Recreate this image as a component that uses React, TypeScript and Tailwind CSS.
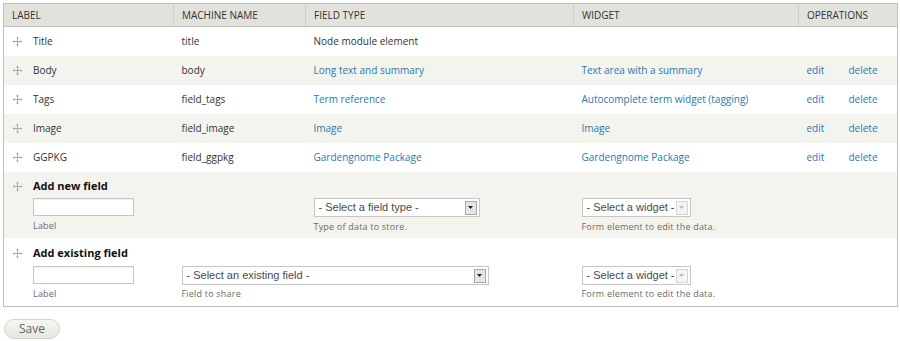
import React from "react";

type Field = {
  label: string;
  machine: string;
  type: string;
  widget: string;
  linked: boolean;
};

const fields: Field[] = [
  { label: "Title", machine: "title", type: "Node module element", widget: "", linked: false },
  { label: "Body", machine: "body", type: "Long text and summary", widget: "Text area with a summary", linked: true },
  { label: "Tags", machine: "field_tags", type: "Term reference", widget: "Autocomplete term widget (tagging)", linked: true },
  { label: "Image", machine: "field_image", type: "Image", widget: "Image", linked: true },
  { label: "GGPKG", machine: "field_ggpkg", type: "Gardengnome Package", widget: "Gardengnome Package", linked: true }
];

const font = "font-['Open_Sans',sans-serif]";

function DragHandle() {
  return (
    <span className="flex w-[21px] shrink-0">
      <svg width="11" height="11" viewBox="0 0 11 11" fill="none">
        <path d="M5.5 1.5v8M1.5 5.5h8" stroke="#aaaaa6" strokeWidth="1" />
        <path d="M5.5 0.5l-1.6 1.8h3.2zM5.5 10.5l-1.6-1.8h3.2zM0.5 5.5l1.8-1.6v3.2zM10.5 5.5l-1.8-1.6v3.2z" fill="#aaaaa6" />
      </svg>
    </span>
  );
}

function FakeSelect({ text, width, disabled }: { text: string; width: string; disabled?: boolean }) {
  return (
    <div
      className={`flex h-[19px] items-center justify-between border border-[#c6c6c6] bg-white pl-[4px] pr-[2px] ${width}`}
    >
      <span className="whitespace-nowrap font-['Liberation_Sans',Arial,sans-serif] text-[11px] leading-[13px] text-[#4a4a4a]">{text}</span>
      <span
        className={`flex h-[14px] w-[12px] shrink-0 items-center justify-center border ${
          disabled ? "border-[#d6d6d6] bg-[#f4f4f4]" : "border-[#a9a9a9] bg-[#e4e4e4]"
        }`}
      >
        <svg width="5" height="3" viewBox="0 0 5 3">
          <path d="M0 0h5L2.5 3z" fill={disabled ? "#b8b8b8" : "#222"} />
        </svg>
      </span>
    </div>
  );
}

function Desc({ children, className = "" }: { children: React.ReactNode; className?: string }) {
  return <div className={`whitespace-nowrap text-[9px] leading-[12px] tracking-[0.2px] text-[#6b6b6b] ${className}`}>{children}</div>;
}

function TextBox() {
  return <div className="ml-[21px] h-[18px] w-[101px] border border-[#c6c6c6] bg-white shadow-[inset_0_1px_1px_rgba(0,0,0,0.06)]" />;
}

export default function App() {
  const link = "text-[#2a78b8]";
  return (
    <div className={`min-h-[341px] bg-white px-[3px] pt-[3px] ${font} text-[#333]`}>
      <table className="w-[894px] table-fixed border-collapse border border-[#bebfb9] text-[10px]">
        <colgroup>
          <col className="w-[170px]" />
          <col className="w-[132px]" />
          <col className="w-[268px]" />
          <col className="w-[225px]" />
          <col className="w-[42px]" />
          <col className="w-[57px]" />
        </colgroup>
        <thead>
          <tr className="bg-[#e1e2dc]">
            {["Label", "Machine name", "Field type", "Widget"].map((h) => (
              <th
                key={h}
                className="border-r border-b border-r-[#cfd0ca] border-b-[#bebfb9] px-[8px] py-[5px] text-left text-[10px] font-normal uppercase leading-[12px]"
              >
                {h}
              </th>
            ))}
            <th colSpan={2} className="border-b border-[#bebfb9] px-[8px] py-[5px] text-left text-[10px] font-normal uppercase leading-[12px]">
              Operations
            </th>
          </tr>
        </thead>
        <tbody>
          {fields.map((f, i) => (
            <tr key={f.machine} className={i % 2 === 1 ? "bg-[#f3f4ee]" : "bg-white"}>
              <td className="py-[8px] pl-[8px] pr-[8px] leading-[13px]">
                <div className="flex items-center">
                  <DragHandle />
                  <span>{f.label}</span>
                </div>
              </td>
              <td className="px-[8px] py-[8px] leading-[13px]">{f.machine}</td>
              <td className={`px-[8px] py-[8px] leading-[13px] ${f.linked ? link : ""}`}>{f.type}</td>
              <td className={`px-[8px] py-[8px] leading-[13px] ${link}`}>{f.widget}</td>
              <td className={`px-[8px] py-[8px] leading-[13px] ${link}`}>{f.linked ? "edit" : ""}</td>
              <td className={`px-[8px] py-[8px] leading-[13px] ${link}`}>{f.linked ? "delete" : ""}</td>
            </tr>
          ))}

          <tr className="bg-[#f3f4ee] align-top">
            <td className="px-[8px] pt-[7px] pb-[6px]">
              <div className="flex items-center">
                <DragHandle />
                <span className="text-[11px] font-bold leading-[14px] text-[#111]">Add new field</span>
              </div>
              <div className="mt-[5px]">
                <TextBox />
              </div>
              <Desc className="ml-[21px] mt-[4px]">Label</Desc>
            </td>
            <td />
            <td className="px-[8px] pt-[26px]">
              <FakeSelect text="- Select a field type -" width="w-[166px]" />
              <Desc className="mt-[4px]">Type of data to store.</Desc>
            </td>
            <td className="px-[8px] pt-[26px]">
              <FakeSelect text="- Select a widget -" width="w-[109px]" disabled />
              <Desc className="mt-[4px]">Form element to edit the data.</Desc>
            </td>
            <td colSpan={2} />
          </tr>

          <tr className="bg-white align-top">
            <td className="px-[8px] pt-[8px] pb-[6px]">
              <div className="flex items-center">
                <DragHandle />
                <span className="text-[11px] font-bold leading-[14px] text-[#111]">Add existing field</span>
              </div>
              <div className="mt-[6px]">
                <TextBox />
              </div>
              <Desc className="ml-[21px] mt-[4px]">Label</Desc>
            </td>
            <td colSpan={2} className="px-[8px] pt-[28px]">
              <FakeSelect text="- Select an existing field -" width="w-[307px]" />
              <Desc className="mt-[3px]">Field to share</Desc>
            </td>
            <td className="px-[8px] pt-[28px]">
              <FakeSelect text="- Select a widget -" width="w-[109px]" disabled />
              <Desc className="mt-[3px]">Form element to edit the data.</Desc>
            </td>
            <td colSpan={2} />
          </tr>
        </tbody>
      </table>

      <button
        type="button"
        className="ml-[1px] mt-[12px] flex h-[20px] w-[56px] items-center justify-center rounded-full border border-[#d2d2ce] bg-gradient-to-b from-[#f6f6f3] to-[#e6e6e1] text-[12px] leading-none text-[#666]"
      >
        Save
      </button>
    </div>
  );
}
